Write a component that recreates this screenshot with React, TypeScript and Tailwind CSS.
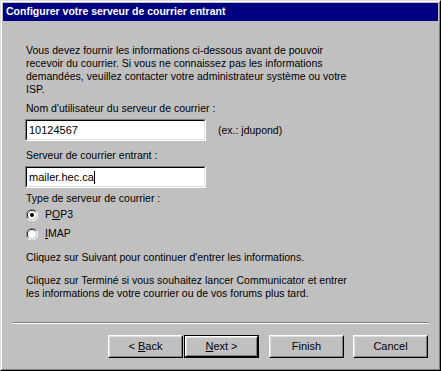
import React from 'react';

const font = { fontFamily: '"Liberation Sans", Arial, sans-serif' };

function Radio({ checked }: { checked: boolean }) {
  return (
    <span className="relative inline-block w-[12px] h-[12px] shrink-0">
      <svg width="12" height="12" viewBox="0 0 12 12" className="absolute inset-0">
        <path d="M10.5 2.5 A5.5 5.5 0 0 0 1.5 10" fill="none" stroke="#808080" strokeWidth="1" />
        <path d="M9.5 3.2 A4.5 4.5 0 0 0 2.5 9" fill="none" stroke="#000" strokeWidth="1" />
        <circle cx="6" cy="6" r="4" fill="#fff" />
        <path d="M1.5 10 A5.5 5.5 0 0 0 10.5 2.5" fill="none" stroke="#fff" strokeWidth="1" />
        <path d="M2.5 9 A4.5 4.5 0 0 0 9.5 3.2" fill="none" stroke="#dfdfdf" strokeWidth="1" />
        {checked && <circle cx="6" cy="6" r="2" fill="#000" />}
      </svg>
    </span>
  );
}

function TextBox({ value, caret }: { value: string; caret?: boolean }) {
  return (
    <div className="w-[181px] h-[22px] border border-t-[#808080] border-l-[#808080] border-r-white border-b-white">
      <div className="w-full h-full border border-t-black border-l-black border-r-[#dfdfdf] border-b-[#dfdfdf] bg-white flex items-center pl-[2px] text-[11px] text-black">
        <span>{value}</span>
        {caret && <span className="inline-block w-px h-[13px] bg-black" />}
      </div>
    </div>
  );
}

function Button({ children, isDefault }: { children: React.ReactNode; isDefault?: boolean }) {
  return (
    <div className={`w-[75px] h-[23px] ${isDefault ? 'border border-black' : ''}`}>
      <div className="w-full h-full border border-t-white border-l-white border-r-black border-b-black">
        <div className="w-full h-full border border-t-[#dfdfdf] border-l-[#dfdfdf] border-r-[#808080] border-b-[#808080] flex items-center justify-center text-[11px] text-black">
          {children}
        </div>
      </div>
    </div>
  );
}

export default function App() {
  return (
    <div style={font} className="w-[441px] h-[371px] bg-[#c0c0c0] border border-t-[#dfdfdf] border-l-[#dfdfdf] border-r-black border-b-black">
      <div className="w-full h-full border border-t-white border-l-white border-r-[#808080] border-b-[#808080] flex flex-col">
        <div className="mx-px mt-px h-[18px] bg-[#000080] flex items-center pl-[3px]">
          <span className="text-white text-[10.5px] font-bold">Configurer votre serveur de courrier entrant</span>
        </div>

        <div className="pl-[24px] text-[10.5px] leading-[13px] text-black">
          <p className="mt-[23px]">
            Vous devez fournir les informations ci-dessous avant de pouvoir
            <br />
            recevoir du courrier. Si vous ne connaissez pas les informations
            <br />
            demandées, veuillez contacter votre administrateur système ou votre
            <br />
            ISP.
          </p>

          <div className="mt-[6px]">Nom d'utilisateur du serveur de courrier :</div>
          <div className="mt-[4px] -ml-px flex items-center gap-[12px]">
            <TextBox value="10124567" />
            <span>(ex.: jdupond)</span>
          </div>

          <div className="mt-[8px]">Serveur de courrier entrant :</div>
          <div className="mt-[4px] -ml-px">
            <TextBox value="mailer.hec.ca" caret />
          </div>

          <div className="mt-[4px]">Type de serveur de courrier :</div>
          <div className="h-[19px] flex items-center gap-[7px]">
            <Radio checked />
            <span>
              P<span className="underline">O</span>P3
            </span>
          </div>
          <div className="h-[19px] flex items-center gap-[7px]">
            <Radio checked={false} />
            <span>
              <span className="underline">I</span>MAP
            </span>
          </div>

          <div className="mt-[8px]">Cliquez sur Suivant pour continuer d'entrer les informations.</div>
          <div className="mt-[10px]">
            Cliquez sur Terminé si vous souhaitez lancer Communicator et entrer
            <br />
            les informations de votre courrier ou de vos forums plus tard.
          </div>
        </div>

        <div className="mx-[10px] mt-[22px] border-t border-t-[#808080] border-b border-b-white" />

        <div className="mt-[11px] flex pl-[106px] gap-[1px]">
          <Button>
            &lt; <span className="underline ml-[3px]">B</span>ack
          </Button>
          <Button isDefault>
            <span className="underline">N</span>ext &gt;
          </Button>
          <div className="ml-[9px] flex gap-[9px]">
            <Button>Finish</Button>
            <Button>Cancel</Button>
          </div>
        </div>
      </div>
    </div>
  );
}
